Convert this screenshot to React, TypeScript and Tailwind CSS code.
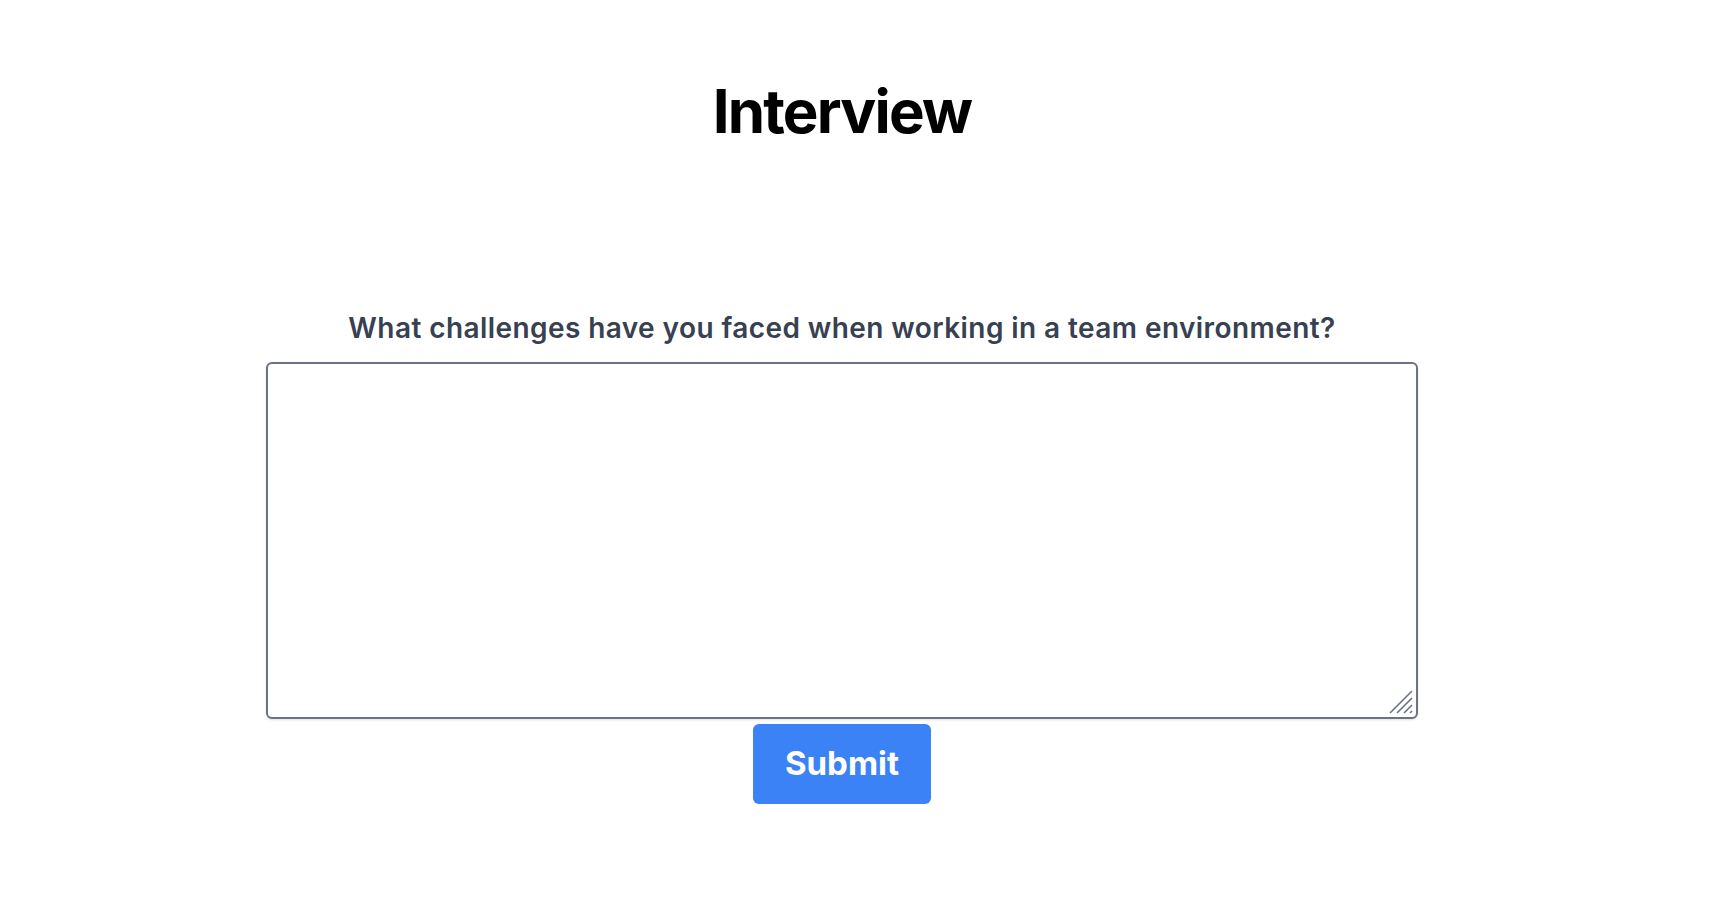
import { useState } from 'react';

export default function App() {
  const [answer, setAnswer] = useState('');

  return (
    <div
      className="min-h-screen bg-white pr-10"
      style={{ fontFamily: 'Inter, "Noto Sans", sans-serif' }}
    >
      <div className="flex flex-col items-center">
        <h1 className="mt-[81px] text-6xl font-bold tracking-[-0.03em] text-black">Interview</h1>

        <div className="mt-[169px] flex w-[1152px] flex-col items-center">
          <label className="text-[28px] leading-9 font-semibold tracking-[0.015em] text-[#374151]">
            What challenges have you faced when working in a team environment?
          </label>
          <div className="relative mt-4 w-full">
            <textarea
              value={answer}
              onChange={(e) => setAnswer(e.target.value)}
              className="block h-[357px] w-full resize-none rounded-md border-2 border-[#6b7280] bg-white p-2 shadow-sm outline-none"
            />
            {/* resize grip */}
            <svg
              className="pointer-events-none absolute right-[4px] bottom-[4px] h-[26px] w-[26px] text-[#6b7280]"
              viewBox="0 0 26 26"
              fill="none"
              stroke="currentColor"
              strokeWidth={1.6}
            >
              <path d="M2 24L24 2M9 24L24 9M16 24L24 16M22 24L24 22" />
            </svg>
          </div>
          <button className="mt-[5px] h-[80px] w-[178px] rounded-md bg-[#3b82f6] text-[33px] font-bold text-white">
            Submit
          </button>
        </div>
      </div>
    </div>
  );
}
